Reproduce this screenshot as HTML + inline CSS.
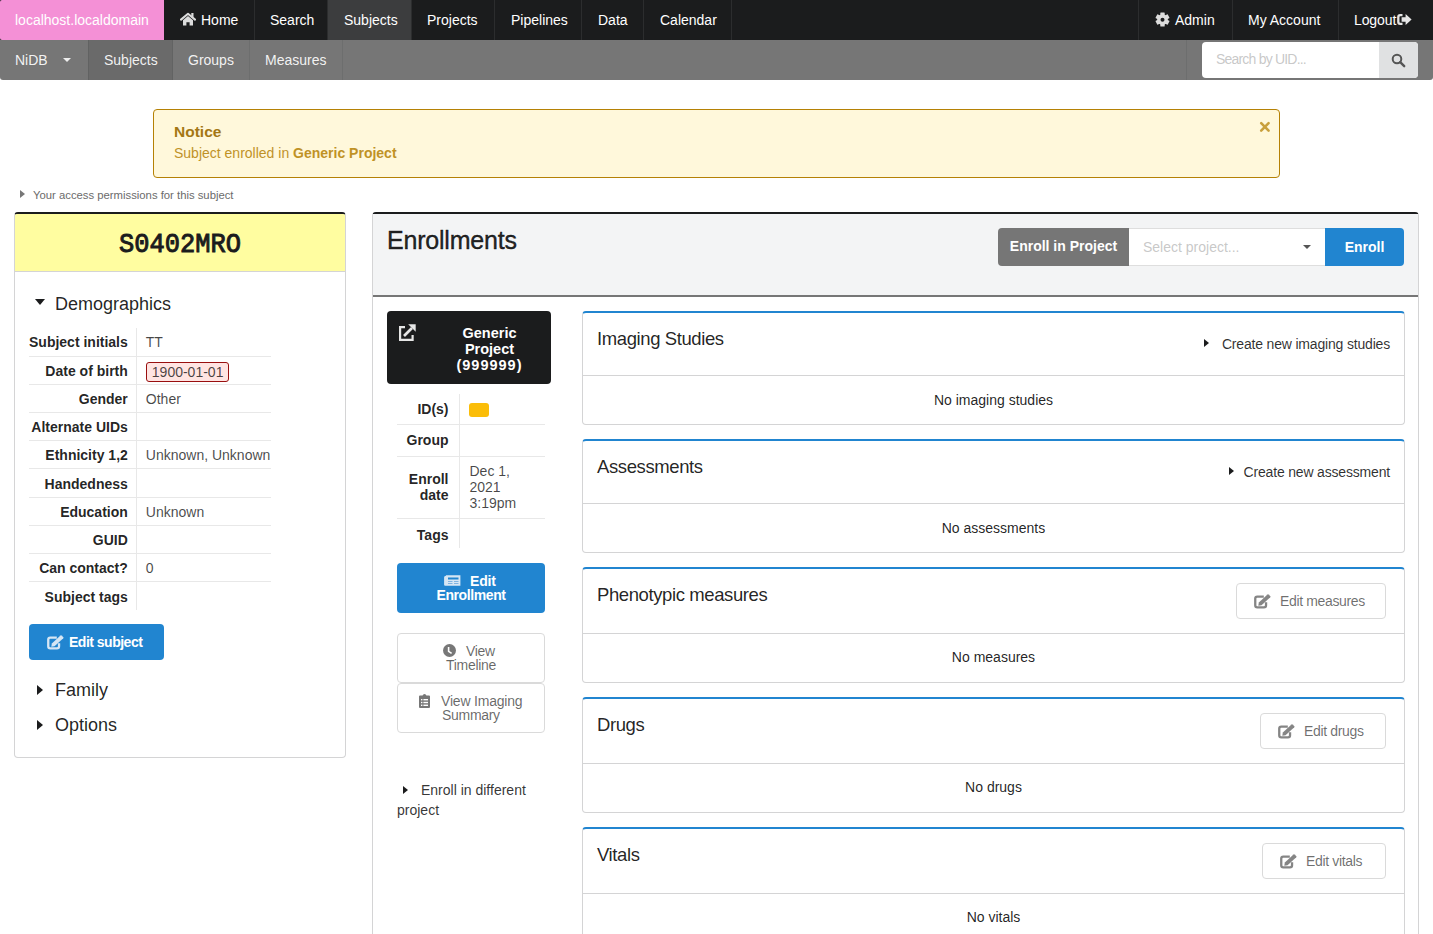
<!DOCTYPE html>
<html><head><meta charset="utf-8">
<style>
*{box-sizing:border-box;margin:0;padding:0}
html,body{width:1433px;height:934px;overflow:hidden;background:#fff}
body{font-family:"Liberation Sans",sans-serif;font-size:14px;color:rgba(0,0,0,.87);position:relative}
.abs{position:absolute}
/* top nav */
#top{left:0;top:0;width:1433px;height:40px;background:#1b1c1d}
#top .it{position:absolute;top:0;height:40px;line-height:40px;color:#fff;font-size:14px;white-space:nowrap}
#top .sep{position:absolute;top:0;width:1px;height:40px;background:rgba(255,255,255,.08)}
#brand{left:0;top:0;width:164px;height:40px;background:#f490d6;border-top-left-radius:2px;border-bottom-left-radius:2px}
#sub{left:0;top:40px;width:1433px;height:40px;background:#767676;border-bottom-left-radius:3px;border-bottom-right-radius:3px}
#sub .it{position:absolute;top:0;height:40px;line-height:40px;color:rgba(255,255,255,.92);font-size:14px;white-space:nowrap}
#sub .sep{position:absolute;top:0;width:1px;height:40px;background:rgba(34,36,38,.1)}

/* notice */
#notice{left:153px;top:109px;width:1127px;height:69px;background:#fff8db;border:1px solid #b58105;border-radius:4px;color:#b58105}
#notice .hd{position:absolute;left:20px;top:12px;font-size:15.5px;font-weight:700;line-height:20px;color:#a47714}
#notice .tx{position:absolute;left:20px;top:33px;font-size:14px;line-height:20px;color:#b58105;opacity:.85}
#notice .tx b{font-weight:700}
#access{left:33px;top:188px;font-size:11.3px;color:#6b6b6b;line-height:14px;white-space:nowrap}
.tri-r{position:absolute;width:0;height:0;border-top:4px solid transparent;border-bottom:4px solid transparent;border-left:5px solid #1b1c1d}
.tri-r.big{border-top:5px solid transparent;border-bottom:5px solid transparent;border-left:6px solid #1b1c1d}
.tri-d{position:absolute;width:0;height:0;border-left:5px solid transparent;border-right:5px solid transparent;border-top:6px solid #1b1c1d}
/* left panel */
#lp{left:14px;top:212px;width:332px;height:546px;border:1px solid #d4d4d5;border-top:2px solid #1b1c1d;border-radius:4px;background:#fff}
#uid{position:absolute;left:0;top:0;width:330px;height:58px;background:#fffda0;border-bottom:1px solid #d4d4d5;border-top-left-radius:2px;border-top-right-radius:2px}
#uid span{position:absolute;left:0;top:15px;width:330px;text-align:center;font-family:"Liberation Mono",monospace;font-weight:400;-webkit-text-stroke:0.9px #1b1c1d;font-size:25.4px;line-height:30px;color:#1b1c1d;transform:scaleY(1.1);transform-origin:50% 0}
.acc{position:absolute;font-size:18px;color:rgba(0,0,0,.87);line-height:22px;white-space:nowrap}
table.def{position:absolute;border-collapse:collapse}
table.def td{height:28.2px;border-bottom:1px solid #e8e8e8;font-size:14px;vertical-align:middle;white-space:nowrap;padding-top:1px}
table.def tr:last-child td{border-bottom:none}
table.enr td{padding-top:0}
table.def td.l{text-align:right;font-weight:700;color:rgba(0,0,0,.87);padding-right:8px;border-right:1px solid #e8e8e8}
table.def td.v{padding-left:9px;color:rgba(0,0,0,.72)}
.btn-blue{position:absolute;background:#2185d0;color:#fff;border-radius:4px;font-weight:700;font-size:14px;text-align:center}
/* right panel */
#rp{left:372px;top:212px;width:1047px;height:740px;border:1px solid #d4d4d5;border-top:2px solid #1b1c1d;border-radius:4px;background:#fff}
#rph{position:absolute;left:0;top:0;width:1045px;height:83px;background:#f3f4f5;border-bottom:2px solid #767676}
.card{position:absolute;left:582px;width:823px;border:1px solid #d4d4d5;border-top:2px solid #2185d0;border-radius:4px;background:#fff}
.card .ch{position:absolute;left:0;top:0;width:821px;border-bottom:1px solid #d4d4d5}
.card .ct{position:absolute;left:14px;font-size:18.5px;letter-spacing:-0.4px;line-height:22px;color:rgba(0,0,0,.87);white-space:nowrap}
.card .cb{position:absolute;left:0;width:821px;text-align:center;font-size:14px;color:rgba(0,0,0,.87)}
.btn-basic{position:absolute;border:1px solid #dadada;border-radius:4px;background:#fff;color:rgba(0,0,0,.6);font-size:14px;white-space:nowrap}
</style></head>
<body>
<svg width="0" height="0" style="position:absolute">
<symbol id="ico-edit" viewBox="0 0 17 15"><path d="M9.8 2.55H3.3Q1.25 2.55 1.25 4.6V11.35Q1.25 13.4 3.3 13.4H10Q12.05 13.4 12.05 11.35V8.2" fill="none" stroke="currentColor" stroke-width="2.3"/><path d="M4.3 11.7L4.85 8.5L13.5 0.4Q14 0 14.5 0.4L16.4 2.3Q16.8 2.8 16.3 3.3L7.5 11.2Z" fill="currentColor"/></symbol>
</svg>
<div id="top" class="abs">
  <div id="brand" class="abs"></div>
  <div class="it" style="left:15px">localhost.localdomain</div>
  <svg class="abs" style="left:180px;top:12px" width="16" height="14" viewBox="0 0 16 14"><path d="M1 7.6L8 1.8L15 7.6" fill="none" stroke="#dcdcdc" stroke-width="2.1" stroke-linecap="round" stroke-linejoin="round"/><rect x="11.3" y="1" width="2.2" height="4.5" fill="#dcdcdc"/><path d="M3 8.3L8 4.1L13 8.3V13.6H9.6V10.2H6.4V13.6H3Z" fill="#dcdcdc"/></svg>
  <div class="it" style="left:201px">Home</div>
  <div class="sep" style="left:254px"></div>
  <div class="it" style="left:270px">Search</div>
  <div class="sep" style="left:327px"></div>
  <div class="abs" style="left:328px;top:0;width:83px;height:40px;background:rgba(255,255,255,.15)"></div>
  <div class="it" style="left:344px">Subjects</div>
  <div class="sep" style="left:411px"></div>
  <div class="it" style="left:427px">Projects</div>
  <div class="sep" style="left:494px"></div>
  <div class="it" style="left:511px">Pipelines</div>
  <div class="sep" style="left:581px"></div>
  <div class="it" style="left:598px">Data</div>
  <div class="sep" style="left:643px"></div>
  <div class="it" style="left:660px">Calendar</div>
  <div class="sep" style="left:731px"></div>

  <div class="sep" style="left:1138px"></div>
  <svg class="abs" style="left:1155px;top:12px" width="15" height="15" viewBox="0 0 15 15"><rect x="5.3" y="0.5" width="4.4" height="4" rx="0.6" fill="#dcdcdc" transform="rotate(0 7.5 7.5)"/><rect x="5.3" y="0.5" width="4.4" height="4" rx="0.6" fill="#dcdcdc" transform="rotate(60 7.5 7.5)"/><rect x="5.3" y="0.5" width="4.4" height="4" rx="0.6" fill="#dcdcdc" transform="rotate(120 7.5 7.5)"/><rect x="5.3" y="0.5" width="4.4" height="4" rx="0.6" fill="#dcdcdc" transform="rotate(180 7.5 7.5)"/><rect x="5.3" y="0.5" width="4.4" height="4" rx="0.6" fill="#dcdcdc" transform="rotate(240 7.5 7.5)"/><rect x="5.3" y="0.5" width="4.4" height="4" rx="0.6" fill="#dcdcdc" transform="rotate(300 7.5 7.5)"/><circle cx="7.5" cy="7.5" r="5.3" fill="#dcdcdc"/><circle cx="7.5" cy="7.8" r="2" fill="#1b1c1d"/></svg>
  <div class="it" style="left:1175px">Admin</div>
  <div class="sep" style="left:1232px"></div>
  <div class="it" style="left:1248px">My Account</div>
  <div class="sep" style="left:1338px"></div>
  <div class="it" style="left:1354px;letter-spacing:-0.1px">Logout</div>
  <svg class="abs" style="left:1397px;top:14px" width="15" height="11" viewBox="0 0 15 11"><path d="M5.5 1.2H3.2Q1.3 1.2 1.3 3.1V7.9Q1.3 9.8 3.2 9.8H5.5" fill="none" stroke="#e6e6e6" stroke-width="2.3"/><path d="M4.6 3.2H8.6V0L14.6 5.5L8.6 11V7.8H4.6Z" fill="#e6e6e6"/></svg>
</div>
<div id="sub" class="abs">
  <div class="it" style="left:15px">NiDB</div>
  <div class="abs" style="left:63px;top:18px;width:0;height:0;border-left:4px solid transparent;border-right:4px solid transparent;border-top:4px solid #eee"></div>
  <div class="sep" style="left:1186px"></div>
  <div class="abs" style="left:1202px;top:2px;width:216px;height:36px;background:#fff;border-radius:4px;overflow:hidden">
    <div class="abs" style="left:14px;top:-1px;line-height:36px;font-size:14px;letter-spacing:-0.8px;color:rgba(191,191,191,.87)">Search by UID...</div>
    <div class="abs" style="left:177px;top:0;width:39px;height:36px;background:#e0e1e2"></div>
    <svg class="abs" style="left:189px;top:11px" width="15" height="15" viewBox="0 0 15 15"><circle cx="6" cy="6" r="4.3" fill="none" stroke="#555" stroke-width="2"/><path d="M9.2 9.2L13.2 13.2" stroke="#555" stroke-width="2.4" stroke-linecap="round"/></svg>
  </div>
  <div class="sep" style="left:88px"></div>
  <div class="abs" style="left:88px;top:0;width:85px;height:40px;background:rgba(0,0,0,.1)"></div>
  <div class="it" style="left:104px">Subjects</div>
  <div class="sep" style="left:172px"></div>
  <div class="it" style="left:188px">Groups</div>
  <div class="sep" style="left:249px"></div>
  <div class="it" style="left:265px">Measures</div>
  <div class="sep" style="left:342px"></div>
</div>

<div id="notice" class="abs">
  <div class="hd">Notice</div>
  <div class="tx">Subject enrolled in <b>Generic Project</b></div>
  <svg class="abs" style="left:1105px;top:11px" width="12" height="12" viewBox="0 0 12 12"><path d="M2.2 2.2L9.6 9.6M9.6 2.2L2.2 9.6" stroke="#c9a03c" stroke-width="2.6" stroke-linecap="round"/></svg>
</div>
<div class="tri-r" style="left:20px;top:190px;border-left-color:#777"></div>
<div id="access" class="abs">Your access permissions for this subject</div>

<div id="lp" class="abs">
  <div id="uid"><span>S0402MRO</span></div>
</div>
<div class="tri-d" style="left:35px;top:299px"></div>
<div class="acc" style="left:55px;top:293px">Demographics</div>
<table class="def" style="left:29px;top:328px;width:242px">
<tr><td class="l" style="width:107px;padding-right:8px">Subject initials</td><td class="v">TT</td></tr>
<tr><td class="l">Date of birth</td><td class="v"><span style="display:inline-block;position:relative;top:1px;border:1px solid #990f0f;background:#ffe4e2;border-radius:3px;color:rgba(0,0,0,.72);padding:0 5px;line-height:18px">1900-01-01</span></td></tr>
<tr><td class="l">Gender</td><td class="v">Other</td></tr>
<tr><td class="l">Alternate UIDs</td><td class="v"></td></tr>
<tr><td class="l">Ethnicity 1,2</td><td class="v">Unknown, Unknown</td></tr>
<tr><td class="l">Handedness</td><td class="v"></td></tr>
<tr><td class="l">Education</td><td class="v">Unknown</td></tr>
<tr><td class="l">GUID</td><td class="v"></td></tr>
<tr><td class="l">Can contact?</td><td class="v">0</td></tr>
<tr><td class="l">Subject tags</td><td class="v"></td></tr>
</table>
<div class="btn-blue" style="left:29px;top:624px;width:135px;height:36px"></div><svg class="abs" style="left:47px;top:635px;color:#d6e6f4" width="17" height="15"><use href="#ico-edit"/></svg><div class="abs" style="left:69px;top:624px;line-height:36px;color:#fff;font-weight:700;font-size:14px;letter-spacing:-0.5px;white-space:nowrap">Edit subject</div>
<div class="tri-r big" style="left:37px;top:685px"></div>
<div class="acc" style="left:55px;top:679px">Family</div>
<div class="tri-r big" style="left:37px;top:720px"></div>
<div class="acc" style="left:55px;top:714px">Options</div>

<div id="rp" class="abs">
  <div id="rph"></div>
</div>
<div class="abs" style="left:387px;top:225px;font-size:25px;line-height:30px;color:rgba(0,0,0,.87);-webkit-text-stroke:0.4px rgba(0,0,0,.87);letter-spacing:-0.2px">Enrollments</div>
<div class="abs" style="left:998px;top:228px;width:131px;height:38px;background:#767676;border-radius:4px 0 0 4px;color:#fff;font-weight:700;font-size:14px;line-height:37px;text-align:center">Enroll in Project</div>
<div class="abs" style="left:1129px;top:228px;width:196px;height:38px;background:#fff;border-top:1px solid #dedede;border-bottom:1px solid #dedede;color:rgba(191,191,191,.87);font-size:14px;line-height:36px;padding-left:14px">Select project...</div>
<div class="abs" style="left:1303px;top:245px;width:0;height:0;border-left:4px solid transparent;border-right:4px solid transparent;border-top:4px solid #555"></div>
<div class="abs" style="left:1325px;top:228px;width:79px;height:38px;background:#2185d0;border-radius:0 4px 4px 0;color:#fff;font-weight:700;font-size:14px;line-height:38px;text-align:center">Enroll</div>

<div class="abs" style="left:387px;top:311px;width:164px;height:73px;background:#1b1c1d;border-radius:4px"></div>
<svg class="abs" style="left:399px;top:324px" width="17" height="17" viewBox="0 0 17 17"><path d="M6 3.2H1.1V15.9H13.6V11" fill="none" stroke="#e6e6e6" stroke-width="2.2"/><path d="M5 12L13 4" stroke="#e6e6e6" stroke-width="2.6"/><path d="M9.2 0.3H16.7V7.8Z" fill="#e6e6e6"/></svg>
<div class="abs" style="left:428px;top:325px;width:123px;text-align:center;color:#fff;font-weight:700;font-size:14.5px;line-height:16px">Generic<br>Project<br><span style="letter-spacing:1px">(999999)</span></div>
<table class="def enr" style="left:397px;top:394px;width:148px">
<tr><td class="l" style="width:62px;height:30px;padding-right:10px">ID(s)</td><td class="v"><span style="display:inline-block;width:20px;height:14px;background:#fbbd08;border-radius:3px;vertical-align:middle"></span></td></tr>
<tr><td class="l" style="height:32px;padding-right:10px">Group</td><td class="v"></td></tr>
<tr><td class="l" style="height:62px;white-space:normal;line-height:16px;padding-right:10px">Enroll<br>date</td><td class="v" style="white-space:normal;line-height:16px;padding-left:10px">Dec 1,<br>2021<br>3:19pm</td></tr>
<tr><td class="l" style="height:30px;padding-right:10px;padding-top:3px">Tags</td><td class="v"></td></tr>
</table>
<div class="btn-blue" style="left:397px;top:563px;width:148px;height:50px"></div>
<svg class="abs" style="left:444px;top:575px" width="17" height="11" viewBox="0 0 17 11"><path d="M2 0.2H16.4V10.8H1.2Q0.1 10.8 0.1 9.7V2.2Q0.1 1 2 0.8Z" fill="#d6e6f4"/><rect x="4" y="2.5" width="10.5" height="2" fill="#2185d0"/><rect x="4" y="6" width="4.5" height="1" fill="#7fb4e2"/><rect x="10" y="6" width="4.5" height="1" fill="#7fb4e2"/><rect x="4" y="8" width="4.5" height="1" fill="#7fb4e2"/><rect x="10" y="8" width="4.5" height="1" fill="#7fb4e2"/></svg>
<div class="abs" style="left:470px;top:573px;line-height:16px;color:#fff;font-weight:700;font-size:14px;letter-spacing:-0.2px">Edit</div>
<div class="abs" style="left:397px;top:587px;width:148px;text-align:center;line-height:16px;color:#fff;font-weight:700;font-size:14px;letter-spacing:-0.4px">Enrollment</div>
<div class="btn-basic" style="left:397px;top:633px;width:148px;height:50px"></div>
<svg class="abs" style="left:443px;top:644px" width="13" height="13" viewBox="0 0 13 13"><circle cx="6.5" cy="6.5" r="6.5" fill="#777"/><path d="M5.6 3V7.4L8.6 9.4" fill="none" stroke="#fff" stroke-width="1.6"/></svg>
<div class="abs" style="left:466px;top:643px;line-height:16px;color:rgba(0,0,0,.6);font-size:14px;letter-spacing:-0.3px">View</div>
<div class="abs" style="left:397px;top:657px;width:148px;text-align:center;line-height:16px;color:rgba(0,0,0,.6);font-size:14px;letter-spacing:-0.3px">Timeline</div>
<div class="btn-basic" style="left:397px;top:683px;width:148px;height:50px"></div>
<svg class="abs" style="left:419px;top:694px" width="11" height="14" viewBox="0 0 11 14"><path d="M1 1.6H3.6Q4 0 5.5 0Q7 0 7.4 1.6H10Q11 1.6 11 2.6V13Q11 14 10 14H1Q0 14 0 13V2.6Q0 1.6 1 1.6Z" fill="#777"/><rect x="2" y="5" width="1.4" height="1.4" fill="#fff"/><rect x="4.4" y="5" width="4.6" height="1.4" fill="#fff"/><rect x="2" y="7.8" width="1.4" height="1.4" fill="#fff"/><rect x="4.4" y="7.8" width="4.6" height="1.4" fill="#fff"/><rect x="2" y="10.6" width="1.4" height="1.4" fill="#fff"/><rect x="4.4" y="10.6" width="4.6" height="1.4" fill="#fff"/></svg>
<div class="abs" style="left:441px;top:693px;line-height:16px;color:rgba(0,0,0,.6);font-size:14px;letter-spacing:-0.2px;white-space:nowrap">View Imaging</div>
<div class="abs" style="left:442px;top:707px;line-height:16px;color:rgba(0,0,0,.6);font-size:14px;letter-spacing:-0.3px">Summary</div>
<div class="tri-r" style="left:403px;top:786px"></div>
<div class="abs" style="left:397px;top:780px;width:150px;font-size:14px;line-height:20px;color:rgba(0,0,0,.8);text-indent:24px">Enroll in different project</div>

<div class="card" style="top:311px;height:114px"><div class="ch" style="height:63px"></div><div class="ct" style="top:15px">Imaging Studies</div><div class="cb" style="top:63px;line-height:48px">No imaging studies</div></div>
<div class="tri-r" style="left:1204px;top:339px"></div>
<div class="abs" style="right:43px;top:334px;font-size:14px;line-height:20px;white-space:nowrap;color:rgba(0,0,0,.82);letter-spacing:-0.18px">Create new imaging studies</div>

<div class="card" style="top:439px;height:114px"><div class="ch" style="height:63px"></div><div class="ct" style="top:15px">Assessments</div><div class="cb" style="top:63px;line-height:48px">No assessments</div></div>
<div class="tri-r" style="left:1229px;top:467px"></div>
<div class="abs" style="right:43px;top:462px;font-size:14px;line-height:20px;white-space:nowrap;color:rgba(0,0,0,.82);letter-spacing:-0.18px">Create new assessment</div>

<div class="card" style="top:567px;height:116px"><div class="ch" style="height:65px"></div><div class="ct" style="top:15px">Phenotypic measures</div><div class="cb" style="top:64px;line-height:48px">No measures</div></div>
<div class="btn-basic" style="left:1236px;top:583px;width:150px;height:36px"></div><svg class="abs" style="left:1254px;top:594px;color:#858585" width="17" height="15"><use href="#ico-edit"/></svg><div class="abs" style="left:1280px;top:583px;line-height:36px;color:rgba(0,0,0,.58);font-size:14px;letter-spacing:-0.35px;white-space:nowrap">Edit measures</div>

<div class="card" style="top:697px;height:116px"><div class="ch" style="height:65px"></div><div class="ct" style="top:15px">Drugs</div><div class="cb" style="top:64px;line-height:48px">No drugs</div></div>
<div class="btn-basic" style="left:1260px;top:713px;width:126px;height:36px"></div><svg class="abs" style="left:1278px;top:724px;color:#858585" width="17" height="15"><use href="#ico-edit"/></svg><div class="abs" style="left:1304px;top:713px;line-height:36px;color:rgba(0,0,0,.58);font-size:14px;letter-spacing:-0.35px;white-space:nowrap">Edit drugs</div>

<div class="card" style="top:827px;height:116px"><div class="ch" style="height:65px"></div><div class="ct" style="top:15px">Vitals</div><div class="cb" style="top:64px;line-height:48px">No vitals</div></div>
<div class="btn-basic" style="left:1262px;top:843px;width:124px;height:36px"></div><svg class="abs" style="left:1280px;top:854px;color:#858585" width="17" height="15"><use href="#ico-edit"/></svg><div class="abs" style="left:1306px;top:843px;line-height:36px;color:rgba(0,0,0,.58);font-size:14px;letter-spacing:-0.35px;white-space:nowrap">Edit vitals</div>
</body></html>
